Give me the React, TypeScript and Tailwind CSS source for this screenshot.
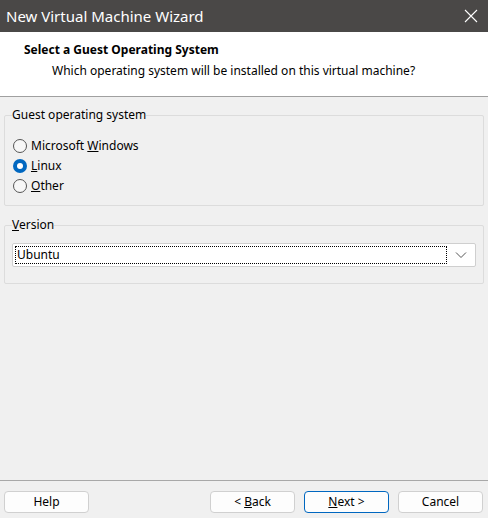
import { useState } from "react";

const OPTIONS = [
  { id: "win", pre: "Microsoft ", key: "W", post: "indows" },
  { id: "linux", pre: "", key: "L", post: "inux" },
  { id: "other", pre: "", key: "O", post: "ther" },
];

function Radio({ checked }: { checked: boolean }) {
  return checked ? (
    <span className="flex h-[14px] w-[14px] items-center justify-center rounded-full bg-[#0067c0]">
      <span className="h-[6px] w-[6px] rounded-full bg-white" />
    </span>
  ) : (
    <span className="h-[14px] w-[14px] rounded-full border border-[#555] bg-[#f7f7f7]" />
  );
}

function Btn({ children, primary }: { children: React.ReactNode; primary?: boolean }) {
  return (
    <button
      type="button"
      className={`h-[22px] w-[85px] rounded-[4px] bg-[#fdfdfd] text-[12px] leading-none text-black ${
        primary ? "border border-[#0067c0]" : "border border-[#d0d0d0]"
      }`}
    >
      {children}
    </button>
  );
}

export default function App() {
  const [os, setOs] = useState("linux");

  return (
    <div
      className="flex h-[518px] w-[488px] flex-col bg-[#f0f0f0] text-[12px] text-black"
      style={{ fontFamily: '"Noto Sans", "Open Sans", sans-serif' }}
    >
      {/* title bar */}
      <div className="flex h-[32px] items-center justify-between bg-[#4a4847] pl-[6px] pr-[10px] text-white">
        <span className="text-[15px]">New Virtual Machine Wizard</span>
        <svg width="14" height="14" viewBox="0 0 14 14" stroke="white" strokeWidth="1.1">
          <path d="M1 1l12 12M13 1L1 13" />
        </svg>
      </div>

      {/* header */}
      <div className="h-[65px] border-b border-[#a0a0a0] bg-white pl-[24px] pt-[9px]">
        <div className="font-bold leading-[18px]">Select a Guest Operating System</div>
        <div className="mt-[3px] pl-[28px] leading-[18px]">
          Which operating system will be installed on this virtual machine?
        </div>
      </div>

      {/* body */}
      <div className="flex flex-1 flex-col px-[4px] pt-[10px]">
        <fieldset className="rounded-[2px] border border-[#dcdcdc] px-[8px] pb-[9px] pt-[13px]">
          <legend className="-ml-[1px] px-[0px] leading-[16px]">Guest operating system</legend>
          <div className="flex flex-col">
            {OPTIONS.map((o) => (
              <label
                key={o.id}
                className="flex h-[20px] cursor-default items-center gap-[4px]"
                onClick={() => setOs(o.id)}
              >
                <Radio checked={os === o.id} />
                <span>
                  {o.pre}
                  <span className="underline">{o.key}</span>
                  {o.post}
                </span>
              </label>
            ))}
          </div>
        </fieldset>

        <fieldset className="mt-[11px] rounded-[2px] border border-[#dcdcdc] px-[7px] pb-[16px] pt-[10px]">
          <legend className="px-[0px] leading-[16px]">
            <span className="underline">V</span>ersion
          </legend>
          <div className="flex h-[24px] items-center rounded-[2px] border border-[#cfcfcf] bg-white pl-[2px] pr-[8px]">
            <div className="flex h-[18px] flex-1 items-center border border-dotted border-black pl-[1px]">
              Ubuntu
            </div>
            <svg className="ml-[8px]" width="12" height="8" viewBox="0 0 12 8" fill="none" stroke="#555" strokeWidth="1">
              <path d="M1 1.5l5 5 5-5" />
            </svg>
          </div>
        </fieldset>

        <div className="flex-1" />
      </div>

      {/* footer */}
      <div className="flex h-[38px] items-start border-t border-[#a8a8a8] pl-[4px] pr-[5px] pt-[10px]">
        <Btn>Help</Btn>
        <div className="flex-1" />
        <div className="flex gap-[9px]">
          <Btn>
            &lt; <span className="underline">B</span>ack
          </Btn>
          <Btn primary>
            <span className="underline">N</span>ext &gt;
          </Btn>
          <Btn>Cancel</Btn>
        </div>
      </div>
    </div>
  );
}
